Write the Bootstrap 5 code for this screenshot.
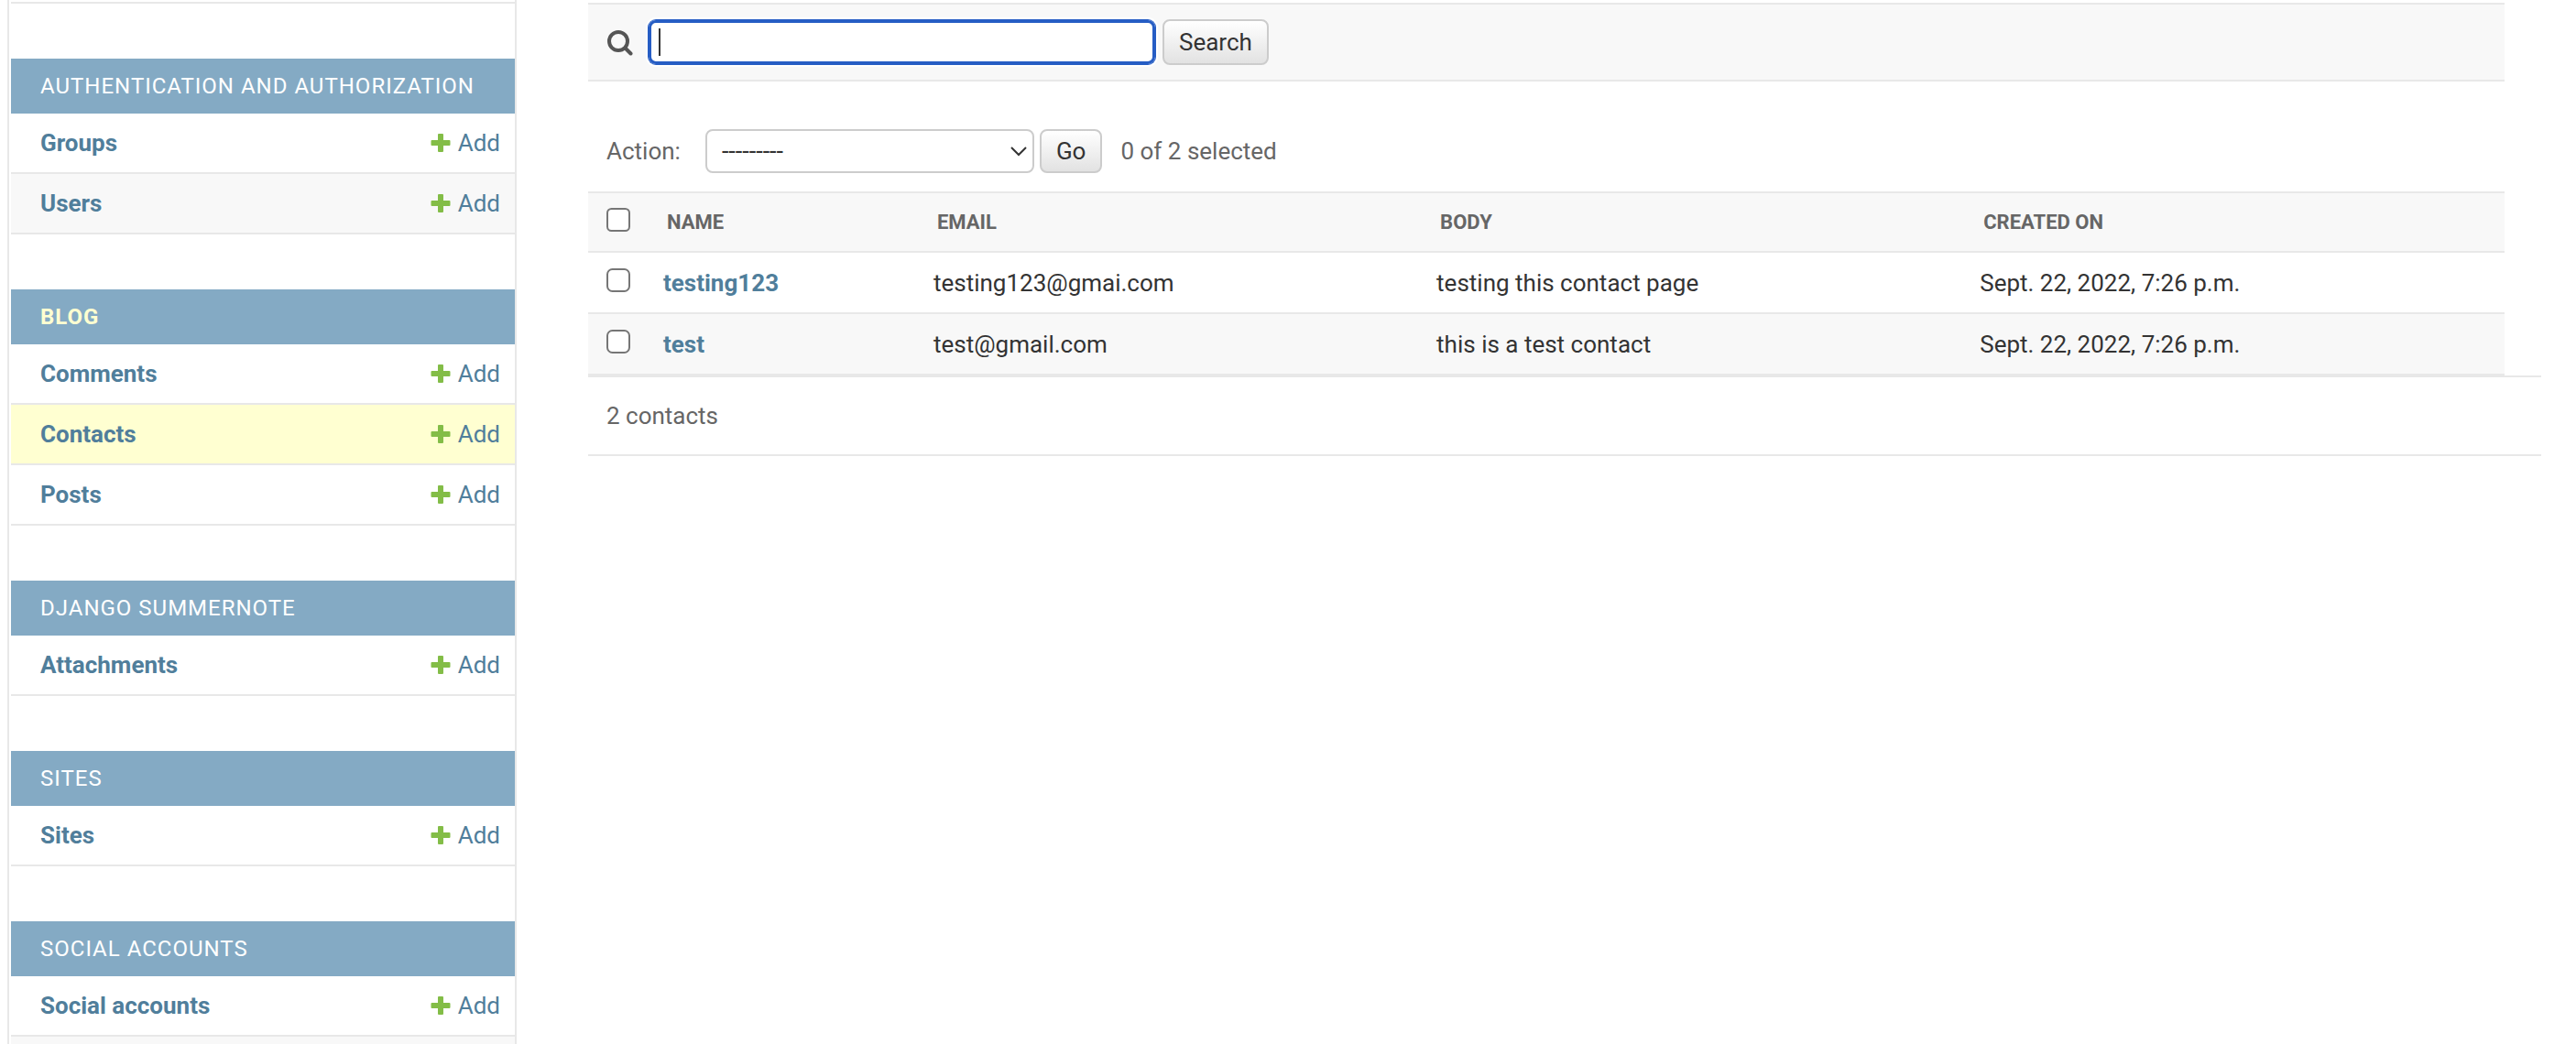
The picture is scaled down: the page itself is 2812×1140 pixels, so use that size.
<!DOCTYPE html>
<html lang="en">
<head>
<meta charset="utf-8">
<meta name="viewport" content="width=device-width, initial-scale=1">
<title>Select contact to change</title>
<link rel="stylesheet" href="https://cdn.jsdelivr.net/npm/bootstrap@5.3.0/dist/css/bootstrap.min.css">
<style>
  :root { --line: #e8e8e8; --soft: #f8f8f8; --link: #507e9b; --head: #84aac4; --muted: #666; --ink: #333; --hot: #ffffd1; }
  body { font-family: Roboto, "Liberation Sans", sans-serif; font-size: 26px; line-height: 30px; color: var(--ink); }
  a { color: var(--link); text-decoration: none; }

  .side-nav { width: 556px; margin-left: 8px; padding-left: 2px; border: solid var(--line); border-width: 0 2px; }
  .side-top { height: 4px; border-bottom: 2px solid var(--line); }
  .app-group { margin-top: 60px; }
  .app-title { height: 60px; padding: 0 32px; background: var(--head); color: #fff; font-size: 24px; font-weight: 400; line-height: 30px; letter-spacing: 1px; text-transform: uppercase; }
  .app-title a { color: inherit; }
  .app-title.current { color: var(--hot); font-weight: 700; }
  .model-item { height: 66px; padding: 0 16px 0 32px; border-bottom: 2px solid var(--line); }
  .model-item:nth-of-type(even) { background: var(--soft); }
  .model-item.current { background: var(--hot); }
  .model-item svg { width: 22px; height: 22px; }

  .content-area { padding: 3px 38px 0 78px; }
  .change-list { margin-right: 40px; }
  .search-bar { height: 86px; padding: 0 20px; background: var(--soft); border: solid var(--line); border-width: 2px 0; gap: 8px; }
  .search-bar label { width: 38px; height: 30px; }
  .search-box { width: 553px; height: 48px; border: 0; border-radius: 8px; outline: 0; box-shadow: 0 0 0 1px #265dc4, inset 0 0 0 3px #265dc4, 0 0 0 3px #fff; background: linear-gradient(var(--ink), var(--ink)) 11px center / 2px 30px no-repeat #fff; }
  .btn-admin { --bs-btn-font-size: 26px; --bs-btn-line-height: 30px; --bs-btn-color: #333; --bs-btn-border-color: #ccc; --bs-btn-hover-border-color: #aaa; --bs-btn-border-width: 2px; --bs-btn-border-radius: 8px; --bs-btn-padding-x: 16px; --bs-btn-padding-y: 8px; background: linear-gradient(#fff, #e2e2e2); }
  .action-bar { height: 120px; padding: 32px 20px 0; color: var(--muted); }
  .action-bar .form-select { width: 359px; height: 48px; margin: 0 6px 0 27px; padding: 0 40px 0 16px; border: 2px solid #ccc; border-radius: 8px; font-size: 27px; line-height: 30px; color: var(--ink); background-position: right 5px center; background-size: 20px 20px; --bs-form-select-bg-img: url("data:image/svg+xml,%3csvg xmlns='http://www.w3.org/2000/svg' viewBox='0 0 20 20'%3e%3cpath fill='none' stroke='%23333' stroke-width='2' d='M2 6l8 8 8-8'/%3e%3c/svg%3e"); background-image: var(--bs-form-select-bg-img); }
  .action-bar .btn-admin { --bs-btn-padding-y: 7px; }

  .result-list { table-layout: fixed; border-collapse: separate; border-spacing: 0; margin: 0; --bs-table-color: #333; }
  .result-list th, .result-list td { height: 67px; padding: 0 16px; border-bottom: 2px solid var(--line); vertical-align: middle; color: var(--ink); }
  .result-list thead th { padding: 0 20px; border-top: 2px solid var(--line); background: var(--soft); color: var(--muted); font-size: 22px; text-transform: uppercase; }
  .result-list tbody tr:nth-child(even) > * { background: var(--soft); }
  .result-list tr > .pick { padding: 0 0 6px 20px; }
  .pick input { width: 26px; height: 26px; margin: 0; border: 2px solid #767676; border-radius: 5px; vertical-align: middle; background-color: #fff; display: block; }
  .col-pick { width: 66px; } .col-name { width: 14.1%; } .col-email { width: 26.25%; } .col-text { width: 28.35%; }
  .paginator { height: 88px; padding: 0 20px; border: solid var(--line); border-width: 2px 0; color: var(--muted); }
</style>
<script src="https://cdn.jsdelivr.net/npm/bootstrap@5.3.0/dist/js/bootstrap.bundle.min.js"></script>
</head>
<body>
<svg class="d-none" aria-hidden="true">
  <symbol id="plus" viewBox="0 0 22 22"><path fill="#83bd47" d="M9 1h4q1 0 1 1v6h6.500q1 0 1 1v4q0 1-1 1H14v6q0 1-1 1H9q-1 0-1-1v-6H1.500q-1 0-1-1V9q0-1 1-1H8V2q0-1 1-1z"/></symbol>
</svg>
<div class="d-flex vh-100 overflow-hidden">
  <nav class="side-nav flex-shrink-0 d-flex flex-column" aria-label="Sidebar">
    <div class="side-top flex-shrink-0"></div>

    <section class="app-group">
      <h2 class="app-title m-0 d-flex align-items-center"><a href="#">Authentication and Authorization</a></h2>
      <div class="model-item d-flex align-items-center justify-content-between"><a class="fw-bold" href="#">Groups</a><a class="d-flex align-items-center gap-2" href="#"><svg><use href="#plus"/></svg>Add</a></div>
      <div class="model-item d-flex align-items-center justify-content-between"><a class="fw-bold" href="#">Users</a><a class="d-flex align-items-center gap-2" href="#"><svg><use href="#plus"/></svg>Add</a></div>
    </section>

    <section class="app-group">
      <h2 class="app-title current m-0 d-flex align-items-center"><a href="#">Blog</a></h2>
      <div class="model-item d-flex align-items-center justify-content-between"><a class="fw-bold" href="#">Comments</a><a class="d-flex align-items-center gap-2" href="#"><svg><use href="#plus"/></svg>Add</a></div>
      <div class="model-item current d-flex align-items-center justify-content-between"><a class="fw-bold" href="#">Contacts</a><a class="d-flex align-items-center gap-2" href="#"><svg><use href="#plus"/></svg>Add</a></div>
      <div class="model-item d-flex align-items-center justify-content-between"><a class="fw-bold" href="#">Posts</a><a class="d-flex align-items-center gap-2" href="#"><svg><use href="#plus"/></svg>Add</a></div>
    </section>

    <section class="app-group">
      <h2 class="app-title m-0 d-flex align-items-center"><a href="#">Django Summernote</a></h2>
      <div class="model-item d-flex align-items-center justify-content-between"><a class="fw-bold" href="#">Attachments</a><a class="d-flex align-items-center gap-2" href="#"><svg><use href="#plus"/></svg>Add</a></div>
    </section>

    <section class="app-group">
      <h2 class="app-title m-0 d-flex align-items-center"><a href="#">Sites</a></h2>
      <div class="model-item d-flex align-items-center justify-content-between"><a class="fw-bold" href="#">Sites</a><a class="d-flex align-items-center gap-2" href="#"><svg><use href="#plus"/></svg>Add</a></div>
    </section>

    <section class="app-group flex-fill d-flex flex-column">
      <h2 class="app-title m-0 d-flex align-items-center"><a href="#">Social Accounts</a></h2>
      <div class="model-item d-flex align-items-center justify-content-between"><a class="fw-bold" href="#">Social accounts</a><a class="d-flex align-items-center gap-2" href="#"><svg><use href="#plus"/></svg>Add</a></div>
      <div class="model-item flex-fill border-0 h-auto"></div>
    </section>
  </nav>

  <main class="content-area flex-grow-1">
    <div class="change-list">
      <form class="search-bar d-flex align-items-center" role="search">
        <label for="searchbar" aria-label="Search"><svg class="d-block" width="30" height="30" viewBox="0 0 30 30" fill="none" stroke="#555" aria-hidden="true"><circle cx="13" cy="14" r="10" stroke-width="4"/><path d="M20.500 21.500l6 6" stroke-width="4" stroke-linecap="round"/></svg></label>
        <input class="search-box" type="text" id="searchbar">
        <button class="btn btn-admin" type="submit">Search</button>
      </form>

      <form>
        <div class="action-bar d-flex align-items-center">
          <label for="action">Action:</label>
          <select class="form-select" id="action"><option>---------</option></select>
          <button class="btn btn-admin" type="button">Go</button>
          <span class="ms-3 ps-1">0 of 2 selected</span>
        </div>
        <table class="table result-list">
          <colgroup><col class="col-pick"><col class="col-name"><col class="col-email"><col class="col-text"><col></colgroup>
          <thead>
            <tr><th class="pick" scope="col"><input class="form-check-input" type="checkbox" aria-label="Select all"></th><th scope="col">Name</th><th scope="col">Email</th><th scope="col">Body</th><th scope="col">Created on</th></tr>
          </thead>
          <tbody>
            <tr><td class="pick"><input class="form-check-input" type="checkbox" aria-label="Select testing123"></td><th scope="row"><a href="#">testing123</a></th><td>testing123@gmai.com</td><td>testing this contact page</td><td>Sept. 22, 2022, 7:26 p.m.</td></tr>
            <tr><td class="pick"><input class="form-check-input" type="checkbox" aria-label="Select test"></td><th scope="row"><a href="#">test</a></th><td>test@gmail.com</td><td>this is a test contact</td><td>Sept. 22, 2022, 7:26 p.m.</td></tr>
          </tbody>
        </table>
      </form>
    </div>
    <div class="paginator d-flex align-items-center">2 contacts</div>
  </main>
</div>
</body>
</html>
